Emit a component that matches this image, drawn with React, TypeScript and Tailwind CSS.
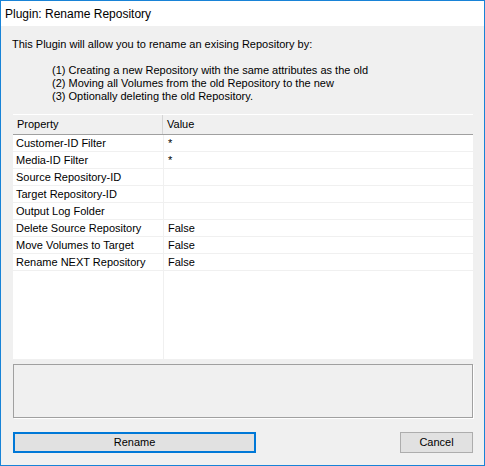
const rows = [
  { name: 'Customer-ID Filter', value: '*' },
  { name: 'Media-ID Filter', value: '*' },
  { name: 'Source Repository-ID', value: '' },
  { name: 'Target Repository-ID', value: '' },
  { name: 'Output Log Folder', value: '' },
  { name: 'Delete Source Repository', value: 'False' },
  { name: 'Move Volumes to Target', value: 'False' },
  { name: 'Rename NEXT Repository', value: 'False' },
]

export default function App() {
  return (
    <div
      className="w-[485px] h-[466px] border border-[#1883d7] bg-[#f0f0f0] flex flex-col text-[11px] text-black"
      style={{ fontFamily: '"Liberation Sans", Arial, sans-serif' }}
    >
      {/* title bar */}
      <div className="h-[25px] bg-white flex items-center pl-[4px] text-[12px]">Plugin: Rename Repository</div>

      {/* intro */}
      <div className="pt-[12px] pl-[11px] leading-[13px]">
        <p>This Plugin will allow you to rename an exising Repository by:</p>
        <div className="pl-[40px] mt-[13px]">
          <p>(1) Creating a new Repository with the same attributes as the old</p>
          <p>(2) Moving all Volumes from the old Repository to the new</p>
          <p>(3) Optionally deleting the old Repository.</p>
        </div>
      </div>

      {/* property grid */}
      <div className="mt-[11px] ml-[12px] w-[461px] flex flex-col">
        <div className="w-[460px] h-[245px] bg-white flex flex-col">
          <div className="h-[21px] flex bg-[#f0f0f0] border-t border-white border-b border-b-[#a0a0a0]">
            <div className="w-[150px] pl-[4px] flex items-center border-r border-[#d5d5d5]">Property</div>
            <div className="flex-1 pl-[4px] flex items-center">Value</div>
          </div>
          <div className="flex-1 flex flex-col">
            {rows.map((r) => (
              <div key={r.name} className="h-[17px] flex border-b border-[#f0f0f0]">
                <div className="w-[150px] pl-[3px] flex items-center">{r.name}</div>
                <div className="flex-1 pl-[4px] flex items-center border-l border-[#f0f0f0]">{r.value}</div>
              </div>
            ))}
            <div className="flex-1 flex">
              <div className="w-[150px]" />
              <div className="flex-1 border-l border-[#f0f0f0]" />
            </div>
          </div>
        </div>
        <div className="mt-[5px] w-[460px] h-[54px] border border-[#a0a0a0] bg-[#f0f0f0] shadow-[1px_1px_0_#ffffff]" />
      </div>

      {/* buttons */}
      <div className="mt-[14px] mx-[12px] flex justify-between">
        <button className="w-[243px] h-[21px] border-2 border-[#0078d7] bg-[#e1e1e1] text-[11px]">Rename</button>
        <button className="w-[73px] h-[21px] border border-[#adadad] bg-[#e1e1e1] text-[11px] mr-[-1px]">Cancel</button>
      </div>
    </div>
  )
}
